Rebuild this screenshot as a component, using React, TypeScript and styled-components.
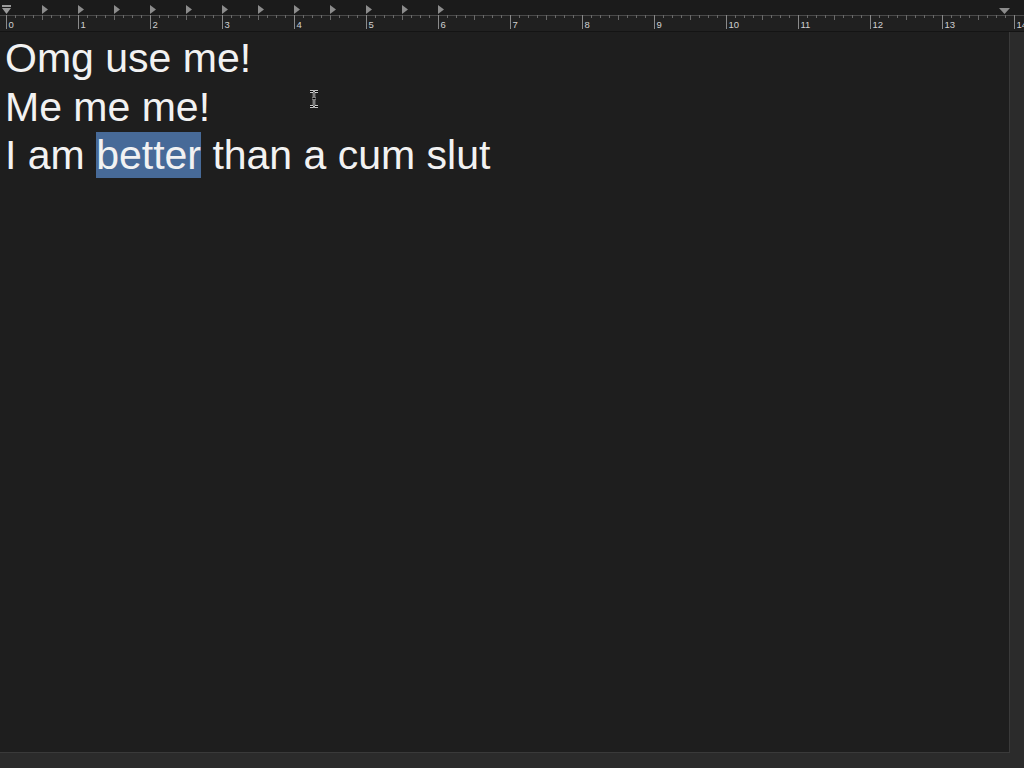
import React from "react";
import styled, { createGlobalStyle } from "styled-components";

const Global = createGlobalStyle`
  html, body { margin: 0; padding: 0; background: #1e1e1e; }
  body { font-family: "Liberation Sans", Arial, sans-serif; overflow: hidden; }
`;

const Window = styled.div`
  width: 1024px;
  height: 768px;
  display: flex;
  flex-direction: column;
  background: #1e1e1e;
  position: relative;
`;

const RulerBar = styled.div`
  height: 31px;
  flex: none;
  background: linear-gradient(#1b1b1b 0 15px, #202020 15px);
  border-bottom: 1px solid #141414;
`;

const Middle = styled.div`
  flex: 1;
  display: flex;
  min-height: 0;
`;

const Editor = styled.div`
  flex: 1;
  padding: 2px 0 0 5px;
  background: #1e1e1e;
  color: #f2f2f2;
  font-family: "Liberation Sans", Arial, sans-serif;
  font-size: 41px;
  line-height: 48.5px;
  border-right: 1px solid #3a3a3a;
  border-bottom: 1px solid #3a3a3a;
`;

const Line = styled.div`
  white-space: pre;
`;

const Selected = styled.span`
  background: #476a98;
`;

const SideStrip = styled.div`
  width: 14px;
  flex: none;
  background: #2b2b2b;
`;

const BottomStrip = styled.div`
  height: 15px;
  flex: none;
  background: #2b2b2b;
`;

const Cursor = styled.svg`
  position: absolute;
  left: 308px;
  top: 90px;
`;

const UNIT = 72;
const X0 = 6.5;

function Ruler() {
  const ticks: React.ReactNode[] = [];
  for (let i = 0; i <= 14 * 8; i++) {
    const x = X0 + i * 9;
    if (x > 1024) break;
    const major = i % 8 === 0;
    const half = i % 4 === 0;
    ticks.push(
      <line
        key={"t" + i}
        x1={x}
        x2={x}
        y1={15}
        y2={major ? 29 : half ? 20 : 18}
        stroke={major ? "#8a8a8a" : "#6a6a6a"}
        strokeWidth={1}
      />
    );
  }
  const nums: React.ReactNode[] = [];
  for (let n = 0; n <= 14; n++) {
    nums.push(
      <text
        key={"n" + n}
        x={X0 + n * UNIT + 2}
        y={28}
        fill="#d0d0d0"
        fontSize={9.5}
        fontFamily='"Liberation Sans", Arial, sans-serif'
      >
        {n}
      </text>
    );
  }
  const tabs: React.ReactNode[] = [];
  for (let k = 1; k <= 12; k++) {
    const x = 6 + k * 36;
    tabs.push(
      <polygon key={"tab" + k} points={`${x},5 ${x + 6},9.5 ${x},14`} fill="#8c8c8c" />
    );
  }
  return (
    <svg width={1024} height={31} style={{ display: "block" }}>
      <line x1={0} x2={1024} y1={15.5} y2={15.5} stroke="#4a4a4a" />
      {ticks}
      {nums}
      {tabs}
      <polygon points="2,8 11,8 6.5,14" fill="#9a9a9a" />
      <rect x={2} y={5} width={9} height={2} fill="#9a9a9a" />
      <polygon points="999,8 1010,8 1004.5,14" fill="#8c8c8c" />
    </svg>
  );
}

export default function App() {
  return (
    <>
      <Global />
      <Window>
        <RulerBar>
          <Ruler />
        </RulerBar>
        <Middle>
          <Editor>
            <Line>Omg use me!</Line>
            <Line>Me me me!</Line>
            <Line>
              I am <Selected>better</Selected> than a cum slut
            </Line>
          </Editor>
          <SideStrip />
        </Middle>
        <BottomStrip />
        <Cursor width={12} height={18} viewBox="0 0 12 18">
          <path
            d="M2 1.5h3l1 1 1-1h3M6 2.5v5.5M4.5 8.5h3M6 9v6.5M2 16.5h3l1-1 1 1h3"
            fill="none"
            stroke="#ffffff"
            strokeWidth={2.4}
          />
          <path
            d="M2 1.5h3l1 1 1-1h3M6 2.5v5.5M4.5 8.5h3M6 9v6.5M2 16.5h3l1-1 1 1h3"
            fill="none"
            stroke="#000000"
            strokeWidth={1}
          />
        </Cursor>
      </Window>
    </>
  );
}
